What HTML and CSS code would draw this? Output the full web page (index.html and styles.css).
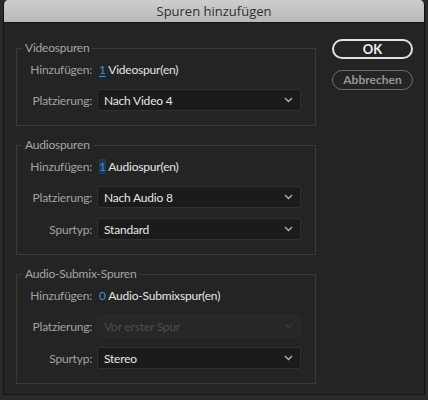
FILE: index.html
```html
<!DOCTYPE html>
<html lang="de">
<head>
<meta charset="utf-8">
<title>Spuren hinzufügen</title>
<link rel="stylesheet" href="styles.css">
</head>
<body>
<div class="window">
  <div class="titlebar">Spuren hinzufügen</div>
  <div class="content">
    <div class="groups">
      <fieldset class="group">
        <legend>Videospuren</legend>
        <div class="rows">
          <span class="label">Hinzufügen:</span>
          <span class="value"><span class="num focused">1</span> Videospur(en)</span>
          <span class="label">Platzierung:</span>
          <div class="select"><span>Nach Video 4</span><svg class="chev" width="9" height="6" viewBox="0 0 9 6"><path d="M1 1 L4.5 4.5 L8 1" fill="none" stroke="#b4b4b4" stroke-width="1.4"/></svg></div>
        </div>
      </fieldset>
      <fieldset class="group">
        <legend>Audiospuren</legend>
        <div class="rows">
          <span class="label">Hinzufügen:</span>
          <span class="value"><span class="num sel">1</span> Audiospur(en)</span>
          <span class="label">Platzierung:</span>
          <div class="select"><span>Nach Audio 8</span><svg class="chev" width="9" height="6" viewBox="0 0 9 6"><path d="M1 1 L4.5 4.5 L8 1" fill="none" stroke="#b4b4b4" stroke-width="1.4"/></svg></div>
          <span class="label">Spurtyp:</span>
          <div class="select"><span>Standard</span><svg class="chev" width="9" height="6" viewBox="0 0 9 6"><path d="M1 1 L4.5 4.5 L8 1" fill="none" stroke="#b4b4b4" stroke-width="1.4"/></svg></div>
        </div>
      </fieldset>
      <fieldset class="group">
        <legend>Audio-Submix-Spuren</legend>
        <div class="rows">
          <span class="label">Hinzufügen:</span>
          <span class="value"><span class="num">0</span> Audio-Submixspur(en)</span>
          <span class="label">Platzierung:</span>
          <div class="select disabled"><span>Vor erster Spur</span><svg class="chev" width="9" height="6" viewBox="0 0 9 6"><path d="M1 1 L4.5 4.5 L8 1" fill="none" stroke="#3c3c3c" stroke-width="1.4"/></svg></div>
          <span class="label">Spurtyp:</span>
          <div class="select"><span>Stereo</span><svg class="chev" width="9" height="6" viewBox="0 0 9 6"><path d="M1 1 L4.5 4.5 L8 1" fill="none" stroke="#b4b4b4" stroke-width="1.4"/></svg></div>
        </div>
      </fieldset>
    </div>
    <div class="buttons">
      <button class="btn primary">OK</button>
      <button class="btn secondary">Abbrechen</button>
    </div>
  </div>
</div>
</body>
</html>
```
FILE: styles.css
```css
html, body {
  margin: 0;
  padding: 0;
  background: #2a2a2a;
}
body {
  width: 428px;
  height: 400px;
  overflow: hidden;
  font-family: Lato, "Open Sans", sans-serif;
  font-size: 12px;
  letter-spacing: -0.2px;
}
.window {
  margin: 0 3px;
  width: 420px;
  height: 394px;
  background: #242424;
  border: 1px solid #141414;
  border-top: none;
  border-radius: 5px 5px 0 0;
  overflow: hidden;
}
.titlebar {
  height: 22px;
  border-bottom: 1px solid #151515;
  background: linear-gradient(#cdcdcd, #b9b9b9);
  color: #303030;
  font-family: "Open Sans", sans-serif;
  font-size: 13px;
  letter-spacing: 0;
  line-height: 22px;
  text-align: center;
}
.content {
  display: flex;
  align-items: flex-start;
  gap: 16px;
  padding: 16px 0 0 12px;
}
.groups {
  display: flex;
  flex-direction: column;
  gap: 12px;
  width: 300px;
  padding-top: 2px;
}
.group {
  margin: 0;
  padding: 5px 13px 14px 0;
  border: 1px solid #3a3a3a;
  min-width: 0;
}
.group legend {
  margin-left: 5px;
  padding: 0 3px;
  line-height: 14px;
  color: #a6a6a6;
}
.rows {
  display: grid;
  grid-template-columns: 75px 204px;
  grid-auto-rows: 22px;
  grid-template-rows: 19px;
  column-gap: 5px;
  row-gap: 10px;
  align-items: center;
}
.label {
  text-align: right;
  color: #a2a2a2;
  white-space: nowrap;
}
.value {
  color: #e4e4e4;
  padding-left: 2px;
  white-space: nowrap;
}
.num {
  color: #3d8fd8;
}
.num.focused {
  text-decoration: underline;
  text-underline-offset: 2px;
}
.num.sel {
  background: #1c3a55;
}
.select {
  display: flex;
  align-items: center;
  justify-content: space-between;
  box-sizing: border-box;
  height: 22px;
  padding: 0 7px 0 6px;
  background: #1b1b1b;
  border: 1px solid #303030;
  border-radius: 2px;
  color: #e6e6e6;
}
.select.disabled {
  background: #272727;
  border-color: #2a2a2a;
  color: #4e4e4e;
}
.buttons {
  display: flex;
  flex-direction: column;
  gap: 11px;
}
.btn {
  width: 81px;
  height: 20px;
  box-sizing: border-box;
  border-radius: 10px;
  background: transparent;
  font-family: Lato, sans-serif;
  font-weight: 700;
  padding: 0;
  line-height: 16px;
}
.btn.primary {
  border: 2px solid #e2e2e2;
  color: #f0f0f0;
  font-size: 13px;
}
.btn.secondary {
  border: 1.5px solid #6c6c6c;
  color: #959595;
  font-size: 12px;
}
```
